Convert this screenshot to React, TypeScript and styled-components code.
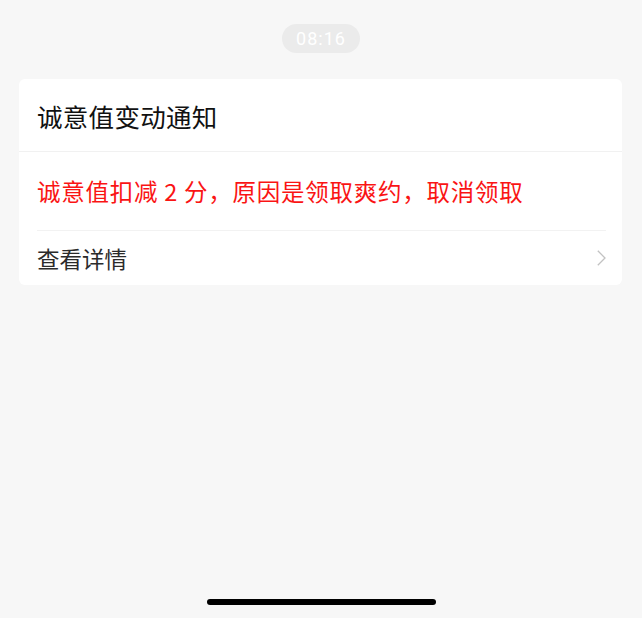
import styled, { createGlobalStyle } from "styled-components";

const GlobalStyle = createGlobalStyle`
  html, body {
    margin: 0;
    padding: 0;
    background: #f7f7f7;
  }
  body {
    font-family: "Noto Sans CJK SC", "Noto Sans", sans-serif;
  }
`;

const Page = styled.div`
  min-height: 100vh;
  box-sizing: border-box;
  display: flex;
  flex-direction: column;
  align-items: stretch;
  padding: 24px 20px 13px 19px;
`;

const TimeRow = styled.div`
  display: flex;
  justify-content: center;
`;

const TimePill = styled.div`
  width: 78px;
  height: 29px;
  border-radius: 15px;
  background: #ebebeb;
  color: #fff;
  font-family: Roboto, "Liberation Sans", sans-serif;
  font-size: 18px;
  letter-spacing: 1px;
  display: flex;
  align-items: center;
  justify-content: center;
  padding-left: 1px;
  box-sizing: border-box;
`;

const Card = styled.div`
  margin-top: 26px;
  background: #fff;
  border-radius: 6px;
  overflow: hidden;
`;

const TitleRow = styled.div`
  height: 73px;
  box-sizing: border-box;
  display: flex;
  align-items: center;
  padding: 0 18px;
  border-bottom: 1px solid #f1f1f1;
  font-size: 25.5px;
  letter-spacing: 0.3px;
  color: #111;
`;

const Body = styled.div`
  height: 78px;
  display: flex;
  align-items: center;
  padding: 0 18px;
  font-size: 23.5px;
  letter-spacing: 0.75px;
  color: #fa1414;
`;

const Divider = styled.div`
  height: 1px;
  background: #f2f2f2;
  margin: 0 16px 0 18px;
`;

const DetailRow = styled.div`
  height: 54px;
  display: flex;
  align-items: center;
  justify-content: space-between;
  padding: 0 16px 0 18px;
  font-size: 22.5px;
  color: #2b2b2b;
`;

const Chevron = styled.svg`
  width: 9px;
  height: 16px;
  flex: none;
`;

const Spacer = styled.div`
  flex: 1;
`;

const HomeBar = styled.div`
  align-self: center;
  width: 229px;
  height: 6px;
  border-radius: 3px;
  background: #000;
  margin-left: 1px;
`;

export default function App() {
  return (
    <>
      <GlobalStyle />
      <Page>
        <TimeRow>
          <TimePill>08:16</TimePill>
        </TimeRow>
        <Card>
          <TitleRow>诚意值变动通知</TitleRow>
          <Body>诚意值扣减 2 分，原因是领取爽约，取消领取</Body>
          <Divider />
          <DetailRow>
            <span>查看详情</span>
            <Chevron viewBox="0 0 9 16">
              <path
                d="M0.8 0.8 L8 8 L0.8 15.2"
                fill="none"
                stroke="#c2c2c2"
                strokeWidth="1.3"
              />
            </Chevron>
          </DetailRow>
        </Card>
        <Spacer />
        <HomeBar />
      </Page>
    </>
  );
}
